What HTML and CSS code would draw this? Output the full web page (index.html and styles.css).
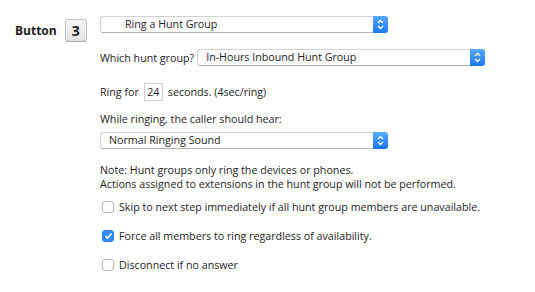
FILE: index.html
```html
<!DOCTYPE html>
<html lang="en">
<head>
    <meta charset="UTF-8">
    <meta name="viewport" content="width=device-width, initial-scale=1.0">
    <title>Button Action</title>
    <link rel="stylesheet" href="styles.css">
</head>
<body>

    <div class="page">
        <div class="key">
            <span class="key-label">Button</span>
            <span class="key-num">3</span>
        </div>

        <div class="settings">
            <div class="select select-action">
                <span class="select-text">Ring a Hunt Group</span>
                <span class="select-btn">
                    <svg width="7" height="11" viewBox="0 0 7 11"><path d="M1 4 L3.5 1.5 L6 4 M1 7 L3.5 9.5 L6 7" fill="none" stroke="#fff" stroke-width="1.3"/></svg>
                </span>
            </div>

            <div class="row row-group">
                <span>Which hunt group?</span>
                <div class="select select-group">
                    <span class="select-text">In-Hours Inbound Hunt Group</span>
                    <span class="select-btn">
                        <svg width="7" height="11" viewBox="0 0 7 11"><path d="M1 4 L3.5 1.5 L6 4 M1 7 L3.5 9.5 L6 7" fill="none" stroke="#fff" stroke-width="1.3"/></svg>
                    </span>
                </div>
            </div>

            <div class="row row-ring">
                <span>Ring for</span>
                <span class="num-input">24</span>
                <span>seconds. (4sec/ring)</span>
            </div>

            <p class="text hear">While ringing, the caller should hear:</p>
            <div class="select select-sound">
                <span class="select-text">Normal Ringing Sound</span>
                <span class="select-btn">
                    <svg width="7" height="11" viewBox="0 0 7 11"><path d="M1 4 L3.5 1.5 L6 4 M1 7 L3.5 9.5 L6 7" fill="none" stroke="#fff" stroke-width="1.3"/></svg>
                </span>
            </div>

            <p class="text note">Note: Hunt groups only ring the devices or phones.<br>
            Actions assigned to extensions in the hunt group will not be performed.</p>

            <label class="check first">
                <span class="box"></span>
                <span>Skip to next step immediately if all hunt group members are unavailable.</span>
            </label>
            <label class="check">
                <span class="box checked">
                    <svg width="9" height="8" viewBox="0 0 9 8"><path d="M1.5 4.2 L3.6 6.2 L7.5 1.5" fill="none" stroke="#fff" stroke-width="1.6"/></svg>
                </span>
                <span>Force all members to ring regardless of availability.</span>
            </label>
            <label class="check">
                <span class="box"></span>
                <span>Disconnect if no answer</span>
            </label>
        </div>
    </div>

</body>
</html>
```

FILE: styles.css
```css
* {
    margin: 0;
    padding: 0;
    box-sizing: border-box;
}

body {
    background-color: white;
    color: #1e1e1e;
    font: normal 10.7px "Open Sans", "DejaVu Sans", sans-serif;
}

.page {
    display: flex;
    padding: 16px 0 0 15px;
}

.key {
    display: flex;
    align-items: center;
    gap: 8px;
    width: 85px;
    height: 28px;
    align-self: flex-start;
}

.key-label {
    font-weight: bold;
    font-size: 12px;
}

.key-num {
    width: 22px;
    height: 23px;
    border: 1px solid #c4c4c4;
    border-bottom-color: #a8a8a8;
    border-radius: 3px;
    background: linear-gradient(#f6f6f6, #e2e2e2);
    font-weight: bold;
    font-size: 14px;
    display: flex;
    align-items: center;
    justify-content: center;
}

.settings {
    display: flex;
    flex-direction: column;
    align-items: flex-start;
}

.select {
    display: flex;
    height: 17px;
    border: 1px solid #d2d2d2;
    border-bottom-color: #b4b4b4;
    border-right: none;
    border-radius: 3px;
    background: white;
    line-height: 15px;
}

.select-text {
    flex: 1;
    padding-left: 8px;
}

.select-btn {
    width: 15px;
    height: 17px;
    margin-top: -1px;
    border-radius: 0 3px 3px 0;
    background: linear-gradient(#5aa9fd, #1878f7);
    display: flex;
    align-items: center;
    justify-content: center;
}

.select-action {
    width: 288px;
}

.select-action .select-text {
    padding-left: 24px;
}

.row {
    display: flex;
    align-items: center;
}

.row-group {
    margin-top: 16px;
    gap: 3px;
}

.select-group {
    width: 288px;
}

.row-ring {
    margin-top: 17px;
    height: 18px;
}

.num-input {
    width: 19px;
    height: 18px;
    border: 1px solid #cfcfcf;
    display: flex;
    align-items: center;
    justify-content: center;
    margin: 0 5px;
}

.text {
    line-height: 14px;
}

.hear {
    margin-top: 11px;
}

.select-sound {
    width: 288px;
    margin-top: 6px;
}

.note {
    margin-top: 14px;
}

.check {
    display: flex;
    align-items: center;
    gap: 5px;
    height: 14px;
    margin-top: 15px;
    padding-left: 2px;
}

.check.first {
    margin-top: 9px;
}

.box {
    width: 12px;
    height: 12px;
    border: 1px solid #b8b8b8;
    border-radius: 3px;
    background: white;
    display: flex;
    align-items: center;
    justify-content: center;
}

.box.checked {
    border-color: #2c86f5;
    background: #2f8cf7;
}
```
